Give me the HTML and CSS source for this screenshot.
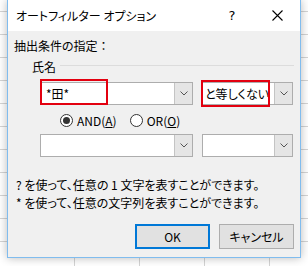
FILE: index.html
```html
<!DOCTYPE html>
<html lang="ja">
<head>
  <meta charset="UTF-8">
  <title>オートフィルター オプション</title>
  <link rel="stylesheet" href="styles.css">
</head>
<body>

  <!-- Dialog -->
  <div class="dialog">
    <div class="titlebar">
      <div class="title">オートフィルター オプション</div>
      <div class="help">?</div>
      <div class="close">
        <svg width="11" height="11" viewBox="0 0 11 11"><path d="M0.5 0.5 L10.5 10.5 M10.5 0.5 L0.5 10.5" stroke="#000" stroke-width="1.1" fill="none"/></svg>
      </div>
    </div>

    <div class="content">
      <div class="caption">抽出条件の指定<span class="colon">：</span></div>

      <div class="group">
        <span>氏名</span>
        <div class="group-line"></div>
      </div>

      <div class="combo-row">
        <div class="combo combo-value">
          <div class="field">*田*</div>
          <div class="drop"><svg width="8" height="5" viewBox="0 0 8 5"><path d="M0.5 0.5 L4 4 L7.5 0.5" stroke="#555" fill="none"/></svg></div>
          <div class="mark mark-value"></div>
        </div>
        <div class="combo combo-op">
          <div class="field">と等しくない</div>
          <div class="drop"><svg width="8" height="5" viewBox="0 0 8 5"><path d="M0.5 0.5 L4 4 L7.5 0.5" stroke="#555" fill="none"/></svg></div>
          <div class="mark mark-op"></div>
        </div>
      </div>

      <div class="radio-row">
        <label class="radio"><span class="dot checked"></span>AND(<u>A</u>)</label>
        <label class="radio"><span class="dot"></span>OR(<u>O</u>)</label>
      </div>

      <div class="combo-row second">
        <div class="combo combo-value">
          <div class="field"></div>
          <div class="drop"><svg width="8" height="5" viewBox="0 0 8 5"><path d="M0.5 0.5 L4 4 L7.5 0.5" stroke="#555" fill="none"/></svg></div>
        </div>
        <div class="combo combo-op">
          <div class="field"></div>
          <div class="drop"><svg width="8" height="5" viewBox="0 0 8 5"><path d="M0.5 0.5 L4 4 L7.5 0.5" stroke="#555" fill="none"/></svg></div>
        </div>
      </div>

      <div class="hints">
        <p>? を使って、任意の 1 文字を表すことができます。</p>
        <p>* を使って、任意の文字列を表すことができます。</p>
      </div>

      <div class="actions">
        <button class="ok">OK</button>
        <button>キャンセル</button>
      </div>
    </div>
  </div>

</body>
</html>
```

FILE: styles.css
```css
body {
  margin: 0;
  width: 308px;
  height: 266px;
  overflow: hidden;
  font-family: "Noto Sans CJK JP", "Noto Sans", sans-serif;
  font-size: 12px;
  color: #000;
  background-color: #ffffff;
  background-image:
    repeating-linear-gradient(to bottom, transparent 0, transparent 22px, #d4d4d4 22px, #d4d4d4 23px),
    repeating-linear-gradient(to right, transparent 0, transparent 64px, #d4d4d4 64px, #d4d4d4 65px);
  background-position: 0 -11px, 10px 0;
}

.dialog {
  margin-left: 7px;
  width: 294px;
  box-sizing: border-box;
  border: 1px solid #80bcee;
  border-top: none;
  background: #f0f0f0;
  box-shadow: 0 0 9px rgba(0, 0, 0, 0.28);
  font-feature-settings: "palt";
}

.titlebar {
  display: flex;
  align-items: center;
  height: 31px;
  padding-left: 8px;
  background: #ffffff;
}

.titlebar .title {
  flex: 1;
  font-size: 12px;
}

.titlebar .help {
  width: 46px;
  text-align: center;
  font-size: 13px;
  font-family: "DejaVu Sans", sans-serif;
  margin-right: -1px;
}

.titlebar .close {
  width: 46px;
  display: flex;
  justify-content: center;
}

.content {
  padding: 7px 6px 8px 6px;
}

.caption {
  line-height: 16px;
}

.caption .colon {
  font-feature-settings: normal;
}

.group {
  display: flex;
  align-items: center;
  margin: 5px 0 0 18px;
  line-height: 16px;
}

.group-line {
  flex: 1;
  height: 1px;
  margin-left: 4px;
  margin-top: -3px;
  background: #dcdcdc;
}

.combo-row {
  display: flex;
  gap: 9px;
  margin: 7px 0 0 26px;
}

.combo-row.second {
  margin-top: 6px;
}

.combo {
  position: relative;
  display: flex;
  height: 23px;
  box-sizing: border-box;
  border: 1px solid #adadad;
  background: #ffffff;
}

.combo-value {
  width: 153px;
}

.combo-op {
  width: 91px;
}

.combo .field {
  flex: 1;
  padding-left: 5px;
  line-height: 21px;
  font-size: 12px;
}

.combo-op .field {
  padding-left: 2px;
}

.combo .drop {
  width: 17px;
  display: flex;
  align-items: center;
  justify-content: center;
  background: #e5e5e5;
  border-left: 1px solid #c4c4c4;
}

/* red annotation boxes */
.mark {
  position: absolute;
  border: 2px solid #e3000f;
  box-sizing: border-box;
}

.mark-value {
  left: -1px;
  top: -4px;
  width: 68px;
  height: 26px;
}

.mark-op {
  left: -2px;
  top: -3px;
  width: 69px;
  height: 27px;
}

.radio-row {
  display: flex;
  align-items: center;
  margin: 7px 0 0 46px;
  height: 16px;
}

.radio {
  display: flex;
  align-items: center;
  margin-right: 13px;
  font-size: 12px;
}

.radio .dot {
  width: 13px;
  height: 13px;
  box-sizing: border-box;
  border: 1px solid #333;
  border-radius: 50%;
  margin-right: 4px;
  display: flex;
  align-items: center;
  justify-content: center;
  background: #fff;
}

.radio .dot.checked::after {
  content: "";
  width: 7px;
  height: 7px;
  border-radius: 50%;
  background: #333;
}

.hints {
  margin: 19px 0 0 2px;
}

.hints p {
  margin: 0;
  line-height: 18px;
}

.actions {
  display: flex;
  justify-content: flex-end;
  gap: 9px;
  margin-top: 12px;
}

.actions button {
  width: 75px;
  height: 25px;
  font-family: inherit;
  font-size: 12px;
  font-feature-settings: "palt";
  color: #000;
  background: #e1e1e1;
  border: 1px solid #adadad;
  padding: 0;
}

.actions button.ok {
  border: 2px solid #0078d7;
}
```
